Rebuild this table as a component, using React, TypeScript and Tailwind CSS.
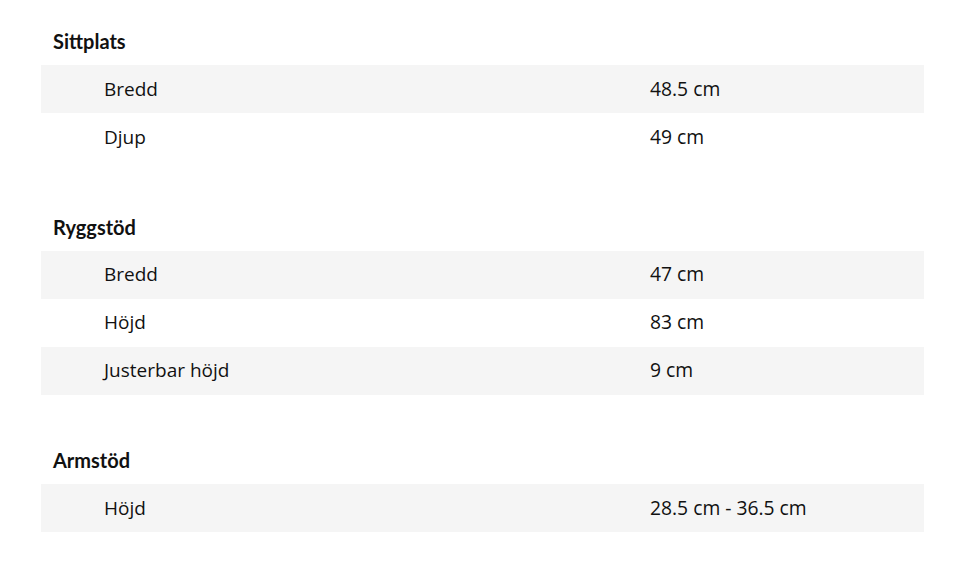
import React from 'react'

type Row = { label: string; value: string }
type Section = { title: string; rows: Row[] }

const sections: Section[] = [
  {
    title: 'Sittplats',
    rows: [
      { label: 'Bredd', value: '48.5 cm' },
      { label: 'Djup', value: '49 cm' },
    ],
  },
  {
    title: 'Ryggstöd',
    rows: [
      { label: 'Bredd', value: '47 cm' },
      { label: 'Höjd', value: '83 cm' },
      { label: 'Justerbar höjd', value: '9 cm' },
    ],
  },
  {
    title: 'Armstöd',
    rows: [{ label: 'Höjd', value: '28.5 cm - 36.5 cm' }],
  },
]

const App = () => {
  return (
    <div className="min-h-[586px] w-[960px] bg-white pl-[41px] pr-[36px] pt-[17px] text-[#111] font-['Open_Sans',sans-serif]">
      <div className="flex flex-col gap-[41.5px]">
        {sections.map((section) => (
          <section key={section.title}>
            <h3 className="flex h-12 items-center px-3 text-[20px] font-bold font-['Lato',sans-serif]">{section.title}</h3>
            <div>
              {section.rows.map((row, i) => (
                <div
                  key={row.label}
                  className={`flex h-12 items-center text-[19px] ${i % 2 === 0 ? 'bg-[#f5f5f5]' : 'bg-white'}`}
                >
                  <span className="w-[609px] pl-[63px]">{row.label}</span>
                  <span className="text-[19.3px]">{row.value}</span>
                </div>
              ))}
            </div>
          </section>
        ))}
      </div>
    </div>
  )
}

export default App
